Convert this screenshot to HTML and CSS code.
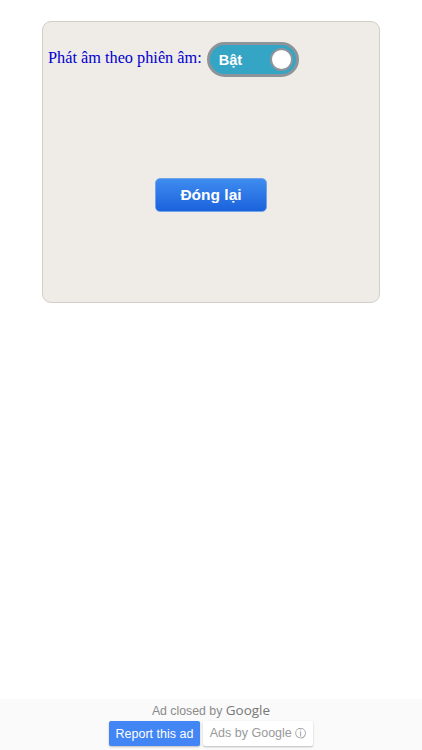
FILE: index.html
```html
<!DOCTYPE html>
<html>
<head>
  <title>Cài đặt</title>
  <link rel="stylesheet" href="styles.css">
</head>
<body>
  <div class="page">
    <div class="panel">
      <div class="setting-row">
        <label class="setting-label">Phát âm theo phiên âm:</label>
        <div class="switch">
          <span class="switch-text">Bật</span>
          <span class="switch-knob"></span>
        </div>
      </div>
      <div class="panel-actions">
        <button class="close-button">Đóng lại</button>
      </div>
    </div>
  </div>

  <div class="ad-bar">
    <div class="ad-closed">Ad closed by <span class="google-word">Google</span></div>
    <div class="ad-buttons">
      <button class="report-button">Report this ad</button>
      <button class="why-button">Ads by Google <span class="info-glyph">ⓘ</span></button>
    </div>
  </div>
</body>
</html>
```

FILE: styles.css
```css
* {
  margin: 0;
  padding: 0;
  box-sizing: border-box;
}

html, body {
  height: 100%;
}

body {
  display: flex;
  flex-direction: column;
  justify-content: space-between;
  background: #ffffff;
  font-family: "Liberation Sans", Arial, sans-serif;
  overflow: hidden;
}

.page {
  padding: 21px 42px 0;
}

.panel {
  width: 338px;
  height: 282px;
  padding: 20px 5px 0;
  background: #efebe6;
  border: 1px solid #d2cfc9;
  border-radius: 9px;
}

.setting-row {
  display: flex;
  align-items: flex-start;
  gap: 5px;
}

.setting-label {
  padding-top: 6px;
  font-family: "Liberation Serif", "Times New Roman", serif;
  font-size: 16.3px;
  color: #0000d0;
}

.switch {
  display: flex;
  align-items: center;
  justify-content: space-between;
  width: 92px;
  height: 35px;
  padding: 0 3px 0 9px;
  background: #34a5c4;
  border: 3px solid #8c949a;
  border-radius: 18px;
}

.switch-text {
  font-size: 14.5px;
  font-weight: 700;
  color: #ffffff;
}

.switch-knob {
  width: 23px;
  height: 23px;
  background: #ffffff;
  border: 2px solid #8c949a;
  border-radius: 50%;
}

.panel-actions {
  display: flex;
  justify-content: center;
  margin-top: 101px;
}

.close-button {
  width: 112px;
  height: 34px;
  font-family: inherit;
  font-size: 15.5px;
  font-weight: 700;
  color: #ffffff;
  background: linear-gradient(#3f8cf0, #1a62dc);
  border: 1px solid #6fa4ea;
  border-radius: 5px;
}

.ad-bar {
  display: flex;
  flex-direction: column;
  align-items: center;
  gap: 1px;
  height: 51px;
  padding-top: 3px;
  background: #fafafa;
}

.ad-closed {
  font-size: 12.3px;
  line-height: 17px;
  color: #8a8a8a;
}

.google-word {
  font-family: "Open Sans", Arial, sans-serif;
  font-size: 13.5px;
  font-weight: 400;
  color: #777777;
}

.ad-buttons {
  display: flex;
  gap: 3px;
}

.report-button,
.why-button {
  height: 25px;
  font-family: inherit;
  font-size: 12.5px;
  border: none;
  border-radius: 2px;
  box-shadow: 0 1px 2px rgba(0, 0, 0, 0.25);
}

.report-button {
  width: 91px;
  color: #ffffff;
  background: #4285f4;
}

.why-button {
  width: 110px;
  color: #999999;
  background: #ffffff;
}

.info-glyph {
  font-family: "DejaVu Sans", sans-serif;
  font-size: 11px;
  color: #808080;
}
```
